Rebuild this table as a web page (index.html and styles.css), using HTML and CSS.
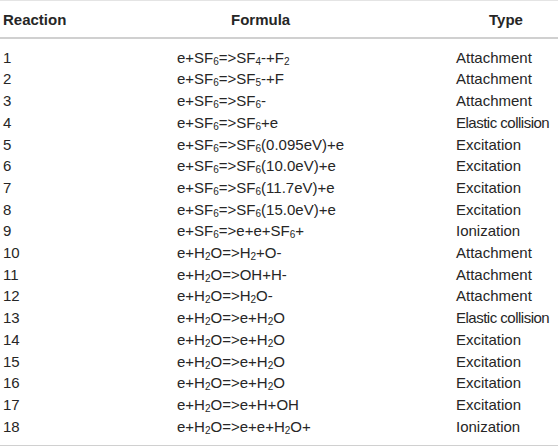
FILE: index.html
```html
<!DOCTYPE html>
<html>
<head>
<meta charset="utf-8">
<link rel="stylesheet" href="styles.css">
</head>
<body>
<table class="tbl">
  <colgroup>
    <col class="w1">
    <col class="w2">
    <col class="w3">
  </colgroup>
  <thead>
    <tr>
      <th class="c1">Reaction</th>
      <th><span class="h2">Formula</span></th>
      <th><span class="h3">Type</span></th>
    </tr>
  </thead>
  <tbody>
    <tr class="first"><td class="c1">1</td><td>e+SF<sub>6</sub>=&gt;SF<sub>4</sub>-+F<sub>2</sub></td><td>Attachment</td></tr>
    <tr><td class="c1">2</td><td>e+SF<sub>6</sub>=&gt;SF<sub>5</sub>-+F</td><td>Attachment</td></tr>
    <tr><td class="c1">3</td><td>e+SF<sub>6</sub>=&gt;SF<sub>6</sub>-</td><td>Attachment</td></tr>
    <tr><td class="c1">4</td><td>e+SF<sub>6</sub>=&gt;SF<sub>6</sub>+e</td><td class="tight">Elastic collision</td></tr>
    <tr><td class="c1">5</td><td>e+SF<sub>6</sub>=&gt;SF<sub>6</sub>(0.095eV)+e</td><td>Excitation</td></tr>
    <tr><td class="c1">6</td><td>e+SF<sub>6</sub>=&gt;SF<sub>6</sub>(10.0eV)+e</td><td>Excitation</td></tr>
    <tr><td class="c1">7</td><td>e+SF<sub>6</sub>=&gt;SF<sub>6</sub>(11.7eV)+e</td><td>Excitation</td></tr>
    <tr><td class="c1">8</td><td>e+SF<sub>6</sub>=&gt;SF<sub>6</sub>(15.0eV)+e</td><td>Excitation</td></tr>
    <tr><td class="c1">9</td><td>e+SF<sub>6</sub>=&gt;e+e+SF<sub>6</sub>+</td><td>Ionization</td></tr>
    <tr><td class="c1">10</td><td>e+H<sub>2</sub>O=&gt;H<sub>2</sub>+O-</td><td>Attachment</td></tr>
    <tr><td class="c1">11</td><td>e+H<sub>2</sub>O=&gt;OH+H-</td><td>Attachment</td></tr>
    <tr><td class="c1">12</td><td>e+H<sub>2</sub>O=&gt;H<sub>2</sub>O-</td><td>Attachment</td></tr>
    <tr><td class="c1">13</td><td>e+H<sub>2</sub>O=&gt;e+H<sub>2</sub>O</td><td class="tight">Elastic collision</td></tr>
    <tr><td class="c1">14</td><td>e+H<sub>2</sub>O=&gt;e+H<sub>2</sub>O</td><td>Excitation</td></tr>
    <tr><td class="c1">15</td><td>e+H<sub>2</sub>O=&gt;e+H<sub>2</sub>O</td><td>Excitation</td></tr>
    <tr><td class="c1">16</td><td>e+H<sub>2</sub>O=&gt;e+H<sub>2</sub>O</td><td>Excitation</td></tr>
    <tr><td class="c1">17</td><td>e+H<sub>2</sub>O=&gt;e+H+OH</td><td>Excitation</td></tr>
    <tr class="last"><td class="c1">18</td><td>e+H<sub>2</sub>O=&gt;e+e+H<sub>2</sub>O+</td><td>Ionization</td></tr>
  </tbody>
</table>
</body>
</html>
```

FILE: styles.css
```css
html, body {
  margin: 0;
  padding: 0;
  background: #fff;
}
.tbl {
  width: 558px;
  border-collapse: collapse;
  table-layout: fixed;
  font-family: "Liberation Sans", Arial, sans-serif;
  font-size: 15px;
  line-height: 21.7px;
  color: #262626;
  border-top: 1px solid #e4e4e4;
  border-bottom: 2px solid #d0d0d0;
}
.w1 { width: 177px; }
.w2 { width: 279px; }
.w3 { width: 102px; }
.tbl th, .tbl td {
  padding: 0;
  text-align: left;
  white-space: nowrap;
  vertical-align: top;
  overflow: visible;
}
.tbl th {
  font-weight: bold;
  padding-top: 8px;
  padding-bottom: 6px;
  border-bottom: 2px solid #d0d0d0;
}
.tbl .c1 { padding-left: 3px; }
.h2 { margin-left: 54px; }
.h3 { margin-left: 33px; }
.tight { letter-spacing: -0.5px; }
.first td { padding-top: 8px; }
.last td { padding-bottom: 8px; }
sub {
  font-size: 10px;
  line-height: 0;
  vertical-align: -2px;
}
```
